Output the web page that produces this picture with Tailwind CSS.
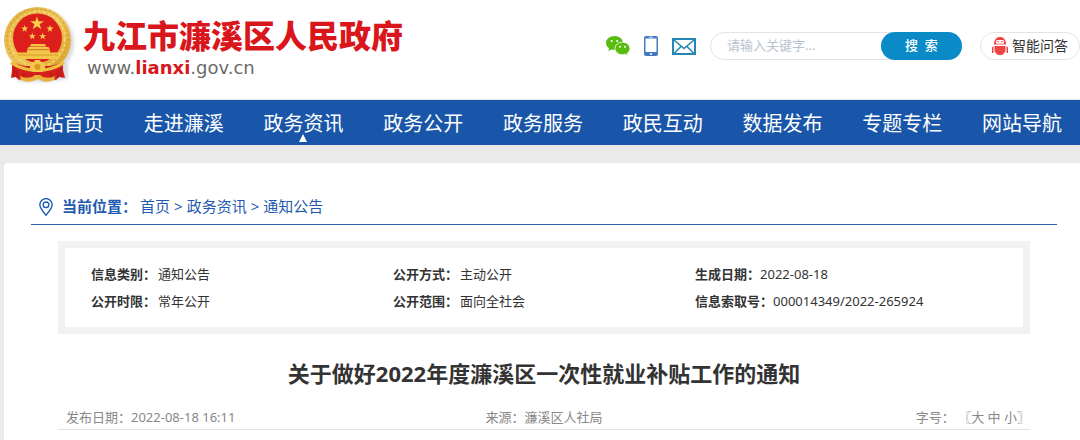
<!DOCTYPE html>
<html lang="zh-CN">
<head>
  <meta charset="UTF-8" />
  <meta name="viewport" content="width=device-width, initial-scale=1.0" />
  <title>九江市濂溪区人民政府</title>
  <script src="https://cdn.jsdelivr.net/npm/@tailwindcss/browser@4"></script>
</head>
<body class="min-h-screen flex flex-col bg-[#eaeaea] text-[#333] font-['Noto_Sans','Noto_Sans_CJK_SC',sans-serif] overflow-x-hidden">

  <!-- 页头 -->
  <header class="flex items-start justify-between h-[100px] bg-white border-b border-[#e4e6ee]">
    <a href="#" class="flex items-start pt-1">
      <svg class="w-20 h-[84px] shrink-0" viewBox="0 4 80 84" aria-hidden="true">
        <defs>
          <linearGradient id="gold" x1="0" y1="0" x2="1" y2="1">
            <stop offset="0" stop-color="#dfae3c" />
            <stop offset=".5" stop-color="#efc85a" />
            <stop offset="1" stop-color="#d99a22" />
          </linearGradient>
          <filter id="soft" x="-20%" y="-20%" width="140%" height="140%"><feGaussianBlur stdDeviation="1.5" /></filter>
          <polygon id="star" points="0,-10 2.25,-3.09 9.51,-3.09 3.63,1.18 5.88,8.09 0,3.82 -5.88,8.09 -3.63,1.18 -9.51,-3.09 -2.25,-3.09" fill="#f7cf4d" />
        </defs>
        <g fill="#c9ced6" opacity=".7" filter="url(#soft)">
          <ellipse cx="41" cy="43" rx="33" ry="34" />
          <path d="M16 64h52v15l-20 3H18z" />
        </g>
        <ellipse cx="37.500" cy="40" rx="33.500" ry="33" fill="url(#gold)" />
        <!-- 麦穗 -->
        <ellipse cx="37.500" cy="39" rx="30.500" ry="30" fill="none" stroke="#cf9429" stroke-width="1" stroke-dasharray="2 2.400" />
        <ellipse cx="37.500" cy="39" rx="27.500" ry="27.500" fill="none" stroke="#f8dd86" stroke-width="1.200" stroke-dasharray="3 2" />
        <circle cx="37.500" cy="38" r="24.500" fill="#dd1f1b" />
        <use href="#star" transform="translate(37 23.500) scale(.72)" />
        <use href="#star" transform="translate(24.700 28.700) scale(.38)" />
        <use href="#star" transform="translate(50 28.700) scale(.38)" />
        <use href="#star" transform="translate(32.300 36.300) scale(.38)" />
        <use href="#star" transform="translate(42.700 36.300) scale(.38)" />
        <!-- 天安门 -->
        <path d="M31 44h14l1 2.500H30zM28.500 47h20l1.500 2.500H27zM27 50h23v3H27zM16 52.500h44V57l-2 2H18l-2-2z" fill="#f2c648" />
        <path d="M29 49.800h19M18 55h40" stroke="#c98a1c" stroke-width=".7" />
        <!-- 绶带与齿轮 -->
        <path d="M12 62l12 4 27 0 12-4 0 8 2 8-6-1-3 3-6-2H25l-6 2-3-3-5 1 1-8z" fill="#d3201c" />
        <path d="M12 61q12 8 25.500 8T63 61l2 3q-13 8-27.500 8T10 64z" fill="#efbf40" />
        <path d="M30 65l2-3h2l1-2h5l1 2h2l2 3v4l-3 3H33l-3-3z" fill="#f2c648" />
        <circle cx="37.500" cy="67" r="3" fill="#d99a22" />
        <path d="M20 76q5 3 12 1l3-2h5l3 2q7 2 12-1l-1 4q-6 3-12 1l-4-2-5 2q-7 2-12-1z" fill="#e8b23a" />
        <path d="M14 68v9M17 70v8M61 68v9M58 70v8M24 73v4M51 73v4" stroke="#9f1512" stroke-width=".8" />
      </svg>
      <span class="block pt-[10px] pl-[3px]">
        <span class="block text-[32px] leading-10 font-black text-[#d9161c] font-['Noto_Sans_CJK_SC',sans-serif]">九江市濂溪区人民政府</span>
        <span class="block pl-1 text-lg leading-7 text-[#6b6b6b] font-['DejaVu_Sans',sans-serif]">www.<b class="text-[#d9161c]">lianxi</b>.gov.cn</span>
      </span>
    </a>

    <div class="flex items-center h-7 mt-8">
      <a href="#" title="微信" class="mr-[14px]">
        <svg class="w-6 h-5" viewBox="0 0 24 20">
          <path d="M8.500 0C3.800 0 0 3 0 6.900c0 2.200 1.200 4.100 3.100 5.400l-.8 2.700 3.100-1.600c1 .3 2 .4 3.100.4 4.700 0 8.500-3 8.500-6.900S13.200 0 8.500 0z" fill="#59bd10" />
          <path d="M16.500 6.200c-4.200 0-7.500 2.800-7.500 6.200s3.300 6.300 7.500 6.300c.9 0 1.800-.1 2.600-.4l2.600 1.500-.7-2.300c1.800-1.200 3-3 3-5.100 0-3.400-3.300-6.200-7.500-6.200z" fill="#59bd10" stroke="#fff" stroke-width=".8" />
          <g fill="#fff"><circle cx="5.700" cy="5" r="1.100" /><circle cx="11.200" cy="5" r="1.100" /><circle cx="14" cy="10.700" r="1" /><circle cx="19" cy="10.700" r="1" /></g>
        </svg>
      </a>
      <a href="#" title="手机版" class="mr-[14px]">
        <svg class="w-[14px] h-5" viewBox="0 0 14 20">
          <rect width="14" height="20" rx="2" fill="#4579c4" />
          <rect x="1.500" y="2.500" width="11" height="13.500" fill="#fff" />
          <path d="M5 1.200h4" stroke="#fff" stroke-width=".8" />
          <circle cx="7" cy="18" r="1.100" fill="#fff" />
        </svg>
      </a>
      <a href="#" title="邮箱" class="mr-[14px]">
        <svg class="w-6 h-[17px]" viewBox="0 0 24 17" fill="none" stroke="#2487b5">
          <rect x="1" y="1" width="22" height="15" stroke-width="2" />
          <path d="M2 2l10 8.500L22 2M2 15.500l7-7M22 15.500l-7-7" stroke-width="1.600" />
        </svg>
      </a>
      <form class="flex w-[252px] h-7 mr-[18px] rounded-full border border-[#e4e4e4]">
        <input type="text" aria-label="关键字" placeholder="请输入关键字..." class="min-w-0 flex-1 pl-4 text-[13px] placeholder:text-[#b9c3cd] focus:outline-none" />
        <button type="button" class="w-[81px] h-7 -m-px rounded-full bg-[#0a8bc8] text-white text-[13px] font-medium whitespace-pre">搜  索</button>
      </form>
      <button type="button" class="flex items-center w-[100px] h-7 pl-[11px] gap-1 rounded-full border border-[#e4e4e4] text-sm whitespace-nowrap">
        <svg class="w-4 h-5 shrink-0" viewBox="0 0 16 20" fill="#ee4444">
          <path d="M2 8.500C2 3.500 4.500 1 8 1s6 2.500 6 7.500z" />
          <rect x="3.800" y="4" width="8.400" height="3.800" rx="1.900" fill="#fff" />
          <circle cx="6" cy="5.600" r=".8" /><circle cx="10" cy="5.600" r=".8" />
          <path d="M2.500 10h11v3.500c0 3-1.800 4.800-4 5.500h-3c-2.200-.7-4-2.500-4-5.500zM0 11.500l1.500-1.500v7H0zM16 11.500L14.500 10v7H16z" />
        </svg>
        智能问答
      </button>
    </div>
  </header>

  <!-- 导航 -->
  <nav class="bg-[#1956a9] text-white pl-1">
    <ul class="grid grid-cols-9 h-[45px] -mr-0.5 text-xl leading-[45px] text-center whitespace-nowrap font-['Noto_Sans_CJK_SC',sans-serif]">
      <li><a href="#">网站首页</a></li>
      <li><a href="#">走进濂溪</a></li>
      <li class="relative">
        <a href="#">政务资讯</a>
        <svg class="absolute bottom-[3px] left-1/2 -translate-x-1/2 w-2 h-2" viewBox="0 0 8 8" fill="#fff"><path d="M4 0l4 8H0z" /></svg>
      </li>
      <li><a href="#">政务公开</a></li>
      <li><a href="#">政务服务</a></li>
      <li><a href="#">政民互动</a></li>
      <li><a href="#">数据发布</a></li>
      <li><a href="#">专题专栏</a></li>
      <li><a href="#">网站导航</a></li>
    </ul>
  </nav>

  <!-- 正文 -->
  <main class="flex-1 mt-[18px] ml-1 pt-[26px] pl-[27px] pr-[23px] bg-white rounded-tl">
    <div class="flex items-center h-9 pl-2 border-b border-[#2a62b0] text-[15px] text-[#1f5bb0]">
      <svg class="w-[14px] h-[18px] mr-[9px]" viewBox="0 0 14 18" fill="none" stroke="#1f5bb0" stroke-width="1.400">
        <path d="M7 17.200C3.500 13 .8 10 .8 6.800a6.200 6.200 0 0 1 12.400 0C13.200 10 10.500 13 7 17.200z" />
        <circle cx="7" cy="6.800" r="2.800" />
      </svg>
      <b>当前位置：</b>
      <div class="flex gap-1 ml-[3px]">
        <a href="#">首页</a><span>&gt;</span><a href="#">政务资讯</a><span>&gt;</span><a href="#">通知公告</a>
      </div>
    </div>

    <div class="mx-[27px]">
      <dl class="grid grid-cols-3 mt-4 px-[26px] pt-[13px] pb-3 border-7 border-[#f2f2f2] text-[13px] leading-[27px]">
        <div class="flex gap-[2px]"><dt class="font-bold">信息类别：</dt><dd>通知公告</dd></div>
        <div class="flex gap-[2px]"><dt class="font-bold">公开方式：</dt><dd>主动公开</dd></div>
        <div class="flex"><dt class="font-bold">生成日期：</dt><dd>2022-08-18</dd></div>
        <div class="flex gap-[2px]"><dt class="font-bold">公开时限：</dt><dd>常年公开</dd></div>
        <div class="flex gap-[2px]"><dt class="font-bold">公开范围：</dt><dd>面向全社会</dd></div>
        <div class="flex"><dt class="font-bold">信息索取号：</dt><dd>000014349/2022-265924</dd></div>
      </dl>

      <h1 class="mt-[23px] text-[22px] leading-8 font-bold text-center">关于做好2022年度濂溪区一次性就业补贴工作的通知</h1>

      <div class="grid grid-cols-3 mt-[17px] px-2 border-b border-[#e2e2e2] text-[13px] leading-[23px] text-[#888]">
        <span>发布日期：2022-08-18 16:11</span>
        <span class="text-center">来源：濂溪区人社局</span>
        <span class="-mr-2 text-right">字号： 〖<a href="#">大</a> <a href="#">中</a> <a href="#">小</a>〗</span>
      </div>
    </div>
  </main>

</body>
</html>
